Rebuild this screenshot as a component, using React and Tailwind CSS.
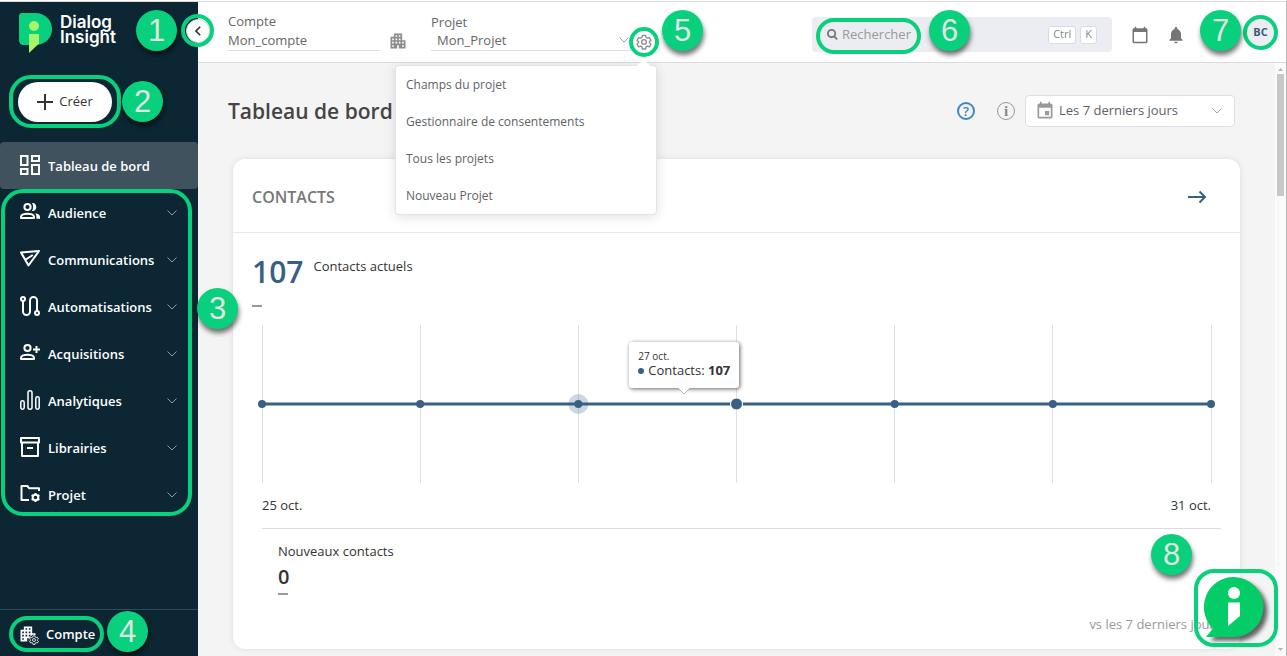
import clsx from 'clsx';
import { MdApartment, MdCalendarToday, MdEvent, MdNotifications } from 'react-icons/md';

const ICONS = {
  dashboard: (
    <g strokeWidth="2">
      <path d="M1 1h6.5v9H1zM12 1h7v5h-7zM1 14h6.5v5H1zM12 10h7v9h-7z" />
    </g>
  ),
  audience: (
    <g>
      <circle cx="7.5" cy="5" r="3.1" />
      <path d="M1 16v-1.3c0-2 3.6-3 6.5-3s6.5 1 6.5 3V16z" strokeLinejoin="round" />
      <path d="M12 1.1c2.6-.4 4.3 1.5 4.3 3.9s-1.7 4.3-4.3 3.9c1.5-2.2 1.5-5.6 0-7.8zM15.3 11.3c2.8.6 4.7 1.7 4.7 3.4v2h-3.6v-2c0-1.4-.3-2.5-1.1-3.4z" fill="currentColor" stroke="none" />
    </g>
  ),
  communications: (
    <path d="M1 3.5l18-1.5L8.5 16.5zM5.8 10.5l7-4.5" strokeLinejoin="round" />
  ),
  automations: (
    <g>
      <circle cx="3" cy="3" r="2" />
      <circle cx="17" cy="17" r="2" />
      <path d="M3 5v10.5a3.5 3.5 0 0 0 7 0V4.5a3.5 3.5 0 0 1 7 0V15" />
    </g>
  ),
  acquisitions: (
    <g>
      <circle cx="7.5" cy="5" r="3.1" />
      <path d="M1 16v-1.3c0-2 3.6-3 6.5-3s6.5 1 6.5 3V16z" strokeLinejoin="round" />
      <path d="M16.5 3v7M13 6.5h7" />
    </g>
  ),
  analytics: (
    <g strokeWidth="1.5">
      <rect x=".8" y="10.8" width="3.4" height="8.4" rx="1.7" />
      <rect x="8" y=".8" width="4" height="18.4" rx="2" />
      <rect x="15.8" y="6.8" width="3.4" height="12.4" rx="1.7" />
    </g>
  ),
  libraries: (
    <g strokeWidth="2">
      <path d="M1 1h18v4.5H1zM2 5.5V19h16V5.5M7 11h6" strokeLinejoin="round" />
    </g>
  ),
  project: (
    <g>
      <path d="M9 16H1.5V2h5.8l2 2.3H19V7" strokeLinejoin="round" />
      <circle cx="15.5" cy="13.5" r="2.8" />
      <path d="M15.5 9v2M15.5 16v2M11.6 11.2l1.7 1M17.7 14.8l1.7 1M11.6 15.8l1.7-1M17.7 12.2l1.7-1" strokeWidth="2" />
    </g>
  ),
};

const MENU = [
  { icon: 'audience', label: 'Audience' },
  { icon: 'communications', label: 'Communications' },
  { icon: 'automations', label: 'Automatisations' },
  { icon: 'acquisitions', label: 'Acquisitions' },
  { icon: 'analytics', label: 'Analytiques' },
  { icon: 'libraries', label: 'Librairies' },
  { icon: 'project', label: 'Projet' },
];

const PROJECT_LINKS = [
  'Champs du projet',
  'Gestionnaire de consentements',
  'Tous les projets',
  'Nouveau Projet',
];

const POINTS = [107, 107, 107, 107, 107, 107, 107];
const HOVERED = 3;
const PREVIOUS = 2;

function Icon({ name }) {
  return (
    <svg viewBox="0 0 20 20" className="mb-[2px] size-5 shrink-0" fill="none" stroke="currentColor" strokeWidth="2">
      {ICONS[name]}
    </svg>
  );
}

function Chevron({ className }) {
  return (
    <svg viewBox="0 0 10 6" className={clsx('h-[6px] w-[10px] shrink-0', className)} fill="none" stroke="currentColor">
      <path d="M.5.5L5 5 9.5.5" />
    </svg>
  );
}

function Gear({ className }) {
  return (
    <svg viewBox="0 0 24 24" className={className} fill="none" stroke="currentColor" strokeWidth="2" strokeLinejoin="round">
      <path d="M9.6 2h4.8l.7 3.2 1.9 1.1 3.1-1 2.4 4.2-2.4 2.1v1.3l2.4 2.1-2.4 4.2-3.1-1-1.9 1.1-.7 3.2H9.6l-.7-3.2L7 18.2l-3.1 1L1.5 15l2.4-2.1v-1.3L1.5 9.5l2.4-4.2 3.1 1 1.9-1.1z" />
      <circle cx="12" cy="12" r="3.6" />
    </svg>
  );
}

function Badge({ n, className }) {
  return (
    <span
      className={clsx(
        'absolute z-30 flex size-[41px] items-center justify-center rounded-full bg-[#08d07c] font-["Liberation_Sans",sans-serif] text-[31px] leading-none font-normal text-[#e0e4e2] shadow-[1px_4px_5px_rgba(0,0,0,0.55)]',
        className
      )}
    >
      {n}
    </span>
  );
}

function Ring({ className }) {
  return <span className={clsx('pointer-events-none absolute z-20 border-4 border-[#08d07c]', className)} />;
}

function Logo() {
  return (
    <a href="#" className="flex items-start gap-2 text-white">
      <svg viewBox="0 0 34 40" className="h-10 w-[34px]">
        <path d="M4 0h13c10 0 17 7 17 16s-7 16-17 16H6c-3 0-5-2-5-5V3c0-2 1-3 3-3z" fill="#08d07c" />
        <circle cx="16" cy="13" r="5" fill="#a6f56b" />
        <path d="M11 21h10v9.5L11 40z" fill="#a6f56b" />
      </svg>
      <span className='pt-[2px] font-["Inter",sans-serif] text-[17px] leading-[15px] font-semibold'>
        Dialog
        <br />
        Insight
      </span>
    </a>
  );
}

function Sidebar() {
  return (
    <aside className="relative z-20 flex w-[198px] shrink-0 flex-col bg-[#0c2733] text-white">
      <div className="flex h-[140px] flex-col items-start justify-between px-[18px] pt-[11px] pb-5">
        <Logo />
        <div className="relative">
          <button className="flex h-10 w-[94px] items-center justify-center gap-[6px] rounded-full bg-white text-[13px] text-[#333]">
            <svg viewBox="0 0 16 16" className="size-4" stroke="currentColor" strokeWidth="2">
              <path d="M8 0v16M0 8h16" />
            </svg>
            Créer
          </button>
          <Ring className="-inset-x-[9px] -top-[7px] -bottom-[6px] rounded-[22px]" />
          <Badge n={2} className="-top-px left-[104px]" />
        </div>
      </div>
      <Badge n={1} className="top-[8px] right-[21px]" />
      <button aria-label="Réduire le menu" className="absolute top-[17px] -right-[12px] flex size-6 items-center justify-center rounded-full border border-[#d0d4d8] bg-white text-[#333]">
        <svg viewBox="0 0 6 10" className="h-[10px] w-[6px]" fill="none" stroke="currentColor" strokeWidth="1.6">
          <path d="M5.2.8L1 5l4.2 4.2" />
        </svg>
      </button>
      <Ring className="top-[12px] -right-[16px] size-[33px] rounded-full" />

      <nav className="text-[13px] font-semibold">
        <a href="#" className="flex h-[47px] items-center gap-2 rounded bg-[#40525e] px-5">
          <Icon name="dashboard" />
          <span className="pt-[2px]">Tableau de bord</span>
        </a>
        <div className="relative">
          {MENU.map((item) => (
            <button key={item.label} className="flex h-[47px] w-full items-center gap-2 pr-[21px] pl-5">
              <Icon name={item.icon} />
              <span className="flex-1 pt-[2px] text-left">{item.label}</span>
              <Chevron className="text-[#8d9aa2]" />
            </button>
          ))}
          <Ring className="top-0 right-[6px] bottom-[2px] left-px rounded-[22px]" />
          <Badge n={3} className="top-[99px] left-[197px]" />
        </div>
      </nav>

      <div className="mt-auto flex h-[47px] items-center border-t border-[#32495a] px-[18px] pt-[2px]">
        <button className="relative flex items-center gap-2 text-[13px] font-semibold">
          <span className="relative">
            <MdApartment className="size-5" />
            <span className="absolute -right-px -bottom-px rounded-full bg-[#0c2733]">
              <Gear className="size-[10px]" />
            </span>
          </span>
          <span className="pt-[2px]">Compte</span>
          <Ring className="-inset-x-[9px] -inset-y-[7px] rounded-full" />
        </button>
        <Badge n={4} className="bottom-1 left-[107px]" />
      </div>
    </aside>
  );
}

function ProjectMenu() {
  return (
    <div className="absolute top-[63px] right-[2px] z-10 w-[262px] rounded border border-[#e2e3ea] bg-white shadow-[0_2px_12px_rgba(0,0,0,0.12)]">
      <span className="absolute -top-[5px] right-[8px] size-[9px] rotate-45 bg-white" />
      {PROJECT_LINKS.map((label) => (
        <a key={label} href="#" className="relative block px-[10px] py-2 text-[12px] leading-[21px] text-[#606266]">
          {label}
        </a>
      ))}
    </div>
  );
}

function Topbar() {
  return (
    <header className="relative flex h-[61px] shrink-0 items-start border-b border-[#dcdcdc] bg-white pl-[30px] text-[13px] text-[#666]">
      <div className="flex items-end">
        <div className="w-[152px] pt-[10px]">
          <label htmlFor="account" className="block leading-[18px]">Compte</label>
          <input id="account" readOnly defaultValue="Mon_compte" className="block h-[21px] w-full border-b border-[#dcdfe6] pb-px outline-none" />
        </div>
        <MdApartment className="ml-2 size-5 text-[#8c8c8c]" />
      </div>

      {/* Project picker and its settings menu */}
      <div className="relative ml-[23px] flex w-[228px]">
        <div className="relative w-[200px] pt-[11px]">
          <label htmlFor="project" className="block leading-[18px]">Projet</label>
          <select id="project" className="block h-5 w-full appearance-none border-b border-[#dcdfe6] pl-[6px] outline-none">
            <option>Mon_Projet</option>
          </select>
          <Chevron className="absolute right-[2px] bottom-[14px] text-[#a0a4aa]" />
        </div>
        <div className="relative mt-[25px] -ml-[2px] flex shrink-0">
          <button aria-label="Paramètres du projet" className="flex size-[30px] items-center justify-center rounded-full bg-white text-[#8c8c8c]">
            <Gear className="size-4" />
          </button>
          <Ring className="inset-0 rounded-full" />
          <Badge n={5} className="-top-[17px] left-[33px]" />
        </div>
        <ProjectMenu />
      </div>

      <div className="relative mt-[15px] ml-auto flex h-[35px] w-[300px] items-center gap-1 rounded bg-[#ebedf2] px-[15px]">
        <svg viewBox="0 0 12 12" className="size-[11px] shrink-0" fill="none" stroke="#777" strokeWidth="2">
          <circle cx="5" cy="5" r="4" />
          <path d="M8 8l3 3.2" />
        </svg>
        <input type="search" aria-label="Rechercher" placeholder="Rechercher" className="min-w-0 flex-1 outline-none placeholder:text-[#999]" />
        <kbd className="flex h-[18px] items-center rounded-[3px] border border-[#d8dbe2] bg-white px-1 font-[inherit] text-[11px] text-[#888]">Ctrl</kbd>
        <kbd className="flex h-[18px] items-center rounded-[3px] border border-[#d8dbe2] bg-white px-1 font-[inherit] text-[11px] text-[#888]">K</kbd>
        <Ring className="top-px -bottom-[2px] left-1 w-[105px] rounded-full" />
        <Badge n={6} className="-top-[7px] left-[117px]" />
      </div>

      <div className="mr-2 ml-[19px] flex h-[33px] items-center pt-[32px] text-[#757575]">
        <button aria-label="Calendrier"><MdCalendarToday className="size-[18px]" /></button>
        <button aria-label="Notifications" className="ml-[17px]"><MdNotifications className="size-5" /></button>
      </div>
      <div className="relative mt-[13px] mr-2 ml-[49px]">
        <button className="flex size-[35px] items-center justify-center rounded-full bg-[#ebedf2] text-[11px] font-bold text-[#3a5a78]">BC</button>
        <Ring className="inset-0 rounded-full" />
        <Badge n={7} className="-top-[5px] right-[37px]" />
      </div>
    </header>
  );
}

function Chart() {
  const at = (i) => `${(i / (POINTS.length - 1)) * 100}%`;
  return (
    <div className="relative mx-[29px] mt-[18px]">
      <svg className="block h-[158px] w-full overflow-visible">
        {POINTS.map((_, i) => (
          <line key={i} x1={at(i)} x2={at(i)} y1="0" y2="158" stroke="#e0e0e0" shapeRendering="crispEdges" />
        ))}
        <circle cx={at(PREVIOUS)} cy="79" r="10" fill="#386085" fillOpacity=".25" />
        <line x1="0" x2="100%" y1="79" y2="79" stroke="#386085" strokeWidth="3" />
        {POINTS.map((_, i) => (
          <circle key={i} cx={at(i)} cy="79" r={i === HOVERED ? 6 : 4} fill="#386085" stroke="#fff" strokeWidth={i === HOVERED ? 1 : 0} />
        ))}
      </svg>
      <div className="absolute top-[17px] left-[44.5%] w-[110px] -translate-x-1/2 rounded-[3px] bg-white px-[9px] pt-[7px] pb-[10px] text-[#333] shadow-[1px_1px_4px_rgba(0,0,0,0.6)]">
        <p className="text-[10px] leading-[14px]">27 oct.</p>
        <p className="flex items-center gap-1 text-[13px] leading-[15px] whitespace-nowrap">
          <span className="size-[6px] rounded-full bg-[#386085]" />
          <span>Contacts: <b>107</b></span>
        </p>
        <svg viewBox="0 0 12 6" className="absolute top-full left-[49px] h-[6px] w-3">
          <path d="M0 0l6 6 6-6z" fill="#fff" />
          <path d="M0 0l6 6 6-6" fill="none" stroke="#999" strokeWidth=".6" />
        </svg>
      </div>
      <div className="mt-3 flex justify-between text-[13px] leading-5 text-[#333]">
        <span>25 oct.</span>
        <span>31 oct.</span>
      </div>
    </div>
  );
}

function ContactsCard() {
  return (
    <section className="mx-[35px] rounded-xl bg-white pb-[15px] text-[13px] shadow-[0_0_6px_rgba(0,0,0,0.1)]">
      <div className="flex h-[74px] items-center justify-between border-b border-[#e8e8e8] pt-[2px] pr-[33px] pl-[19px]">
        <h2 className="text-[16px] font-semibold text-[#777]">CONTACTS</h2>
        <a href="#" aria-label="Voir les contacts" className="text-[#386085]">
          <svg viewBox="0 0 20 14" className="h-[14px] w-5" fill="none" stroke="currentColor" strokeWidth="2">
            <path d="M1 7h17M12.5 1.5L18 7l-5.5 5.5" />
          </svg>
        </a>
      </div>
      <div className="flex items-start gap-[10px] pt-[19px] pl-[19px] text-[#333]">
        <strong className="text-[30px] leading-10 font-semibold text-[#386085]">107</strong>
        <span className="pt-1 leading-5">Contacts actuels</span>
      </div>
      <div className="mt-[13px] ml-[19px] h-[2px] w-[10px] bg-[#999]" />
      <Chart />
      <div className="mr-[19px] ml-[29px] mt-[13px] border-t border-[#dcdcdc] px-4 pt-3 text-[#333]">
        <h3 className="leading-5">Nouveaux contacts</h3>
        <p className="mt-[2px] text-[20px] leading-7 font-semibold">0</p>
        <div className="mt-[2px] h-[2px] w-[10px] bg-[#999]" />
      </div>
      <p className="mt-[19px] mr-[19px] text-right leading-5 text-[#999]">vs les 7 derniers jours</p>
    </section>
  );
}

function Scrollbar() {
  return (
    <div className="flex w-[11px] shrink-0 flex-col items-center justify-between bg-[#fafafa] py-[5px]">
      <div className="flex flex-col items-center gap-[3px]">
        <svg viewBox="0 0 5 3" className="h-[3px] w-[5px]"><path d="M0 3L2.5 0 5 3z" fill="#b5b5b5" /></svg>
        <div className="h-[122px] w-[7px] bg-[#c8c8c8]" />
      </div>
      <svg viewBox="0 0 5 3" className="h-[3px] w-[5px]"><path d="M0 0l2.5 3L5 0z" fill="#b5b5b5" /></svg>
    </div>
  );
}

function ChatLauncher() {
  return (
    <div className="absolute right-[9px] bottom-[9px] z-30 h-[78px] w-[84px]">
      <button aria-label="Aide" className="absolute top-2 left-[10px]">
        <svg viewBox="0 0 60 60" className="size-[60px] drop-shadow-[4px_4px_2px_rgba(0,0,0,0.6)]">
          <path d="M30 0a30 30 0 1 1-1 60H2l7-8.5A30 30 0 0 1 30 0z" fill="#04cc66" />
          <circle cx="30" cy="16" r="6" fill="#fff" />
          <path d="M24 25.5h12V39L24 49z" fill="#fff" />
        </svg>
      </button>
      <Ring className="inset-0 rounded-[20px]" />
      <Badge n={8} className="-top-[35px] right-[86px]" />
    </div>
  );
}

export default function App() {
  return (
    <div className='relative flex h-screen flex-col overflow-hidden bg-white pt-px font-["Open_Sans",sans-serif]'>
      <div className="flex min-h-0 flex-1 border-t border-r border-t-[#dcdcdc] border-r-[#b8b8b8]">
        <Sidebar />
        <div className="flex min-w-0 flex-1 flex-col">
          <Topbar />
          <div className="flex min-h-0 flex-1">
            <main className="min-w-0 flex-1 overflow-hidden bg-[#f4f4f4]">
              <div className="flex h-24 items-center pr-10 pl-[30px]">
                <h1 className="flex-1 pt-[2px] text-[21px] font-semibold text-[#444]">Tableau de bord</h1>
                <button aria-label="Aide de la page" className="flex size-[18px] items-center justify-center rounded-full border-2 border-[#3f86c8] text-[13px] leading-none font-semibold text-[#3f86c8]">?</button>
                <button aria-label="Information" className='mr-[10px] ml-[22px] flex size-[18px] items-center justify-center rounded-full border border-[#999] font-["Liberation_Serif",serif] text-[15px] leading-none font-bold text-[#888]'>i</button>
                <div className="relative">
                  <MdEvent className="pointer-events-none absolute top-[6px] left-[10px] size-5 text-[#999]" />
                  <select aria-label="Période" className="h-8 w-[210px] appearance-none rounded border border-[#dcdfe6] bg-white pr-7 pl-[33px] text-[13px] text-[#606266]">
                    <option>Les 7 derniers jours</option>
                  </select>
                  <Chevron className="pointer-events-none absolute top-[13px] right-[13px] text-[#a0a4aa]" />
                </div>
              </div>
              <ContactsCard />
            </main>
            <Scrollbar />
          </div>
        </div>
      </div>
      <ChatLauncher />
    </div>
  );
}
